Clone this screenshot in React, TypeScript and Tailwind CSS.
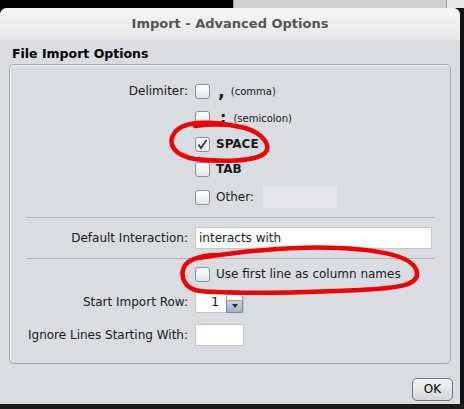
import React from "react";

function Box({ checked = false }: { checked?: boolean }) {
  return (
    <span className="relative inline-flex h-[15px] w-[15px] shrink-0 items-center justify-center rounded-[3px] border border-[#8d9096] bg-gradient-to-b from-white to-[#e4e6ea]">
      {checked && (
        <svg width="11" height="11" viewBox="0 0 11 11">
          <path d="M1.5 5.5 L4 9 L9.5 1" fill="none" stroke="#2a2d33" strokeWidth="1.6" />
        </svg>
      )}
    </span>
  );
}

function Row({
  label,
  h,
  children,
}: {
  label?: string;
  h: string;
  children: React.ReactNode;
}) {
  return (
    <div className={`flex shrink-0 items-center ${h}`}>
      <div className="w-[185px] pr-[7px] text-right">{label}</div>
      <div className="flex flex-1 items-center">{children}</div>
    </div>
  );
}

export default function App() {
  return (
    <div
      className="relative flex h-[409px] w-[464px] flex-col overflow-hidden bg-[#121212] text-[12px] text-[#1a1a1a]"
      style={{ fontFamily: '"DejaVu Sans", sans-serif' }}
    >
      <div className="flex h-[8px] shrink-0">
        <div className="w-[233px] bg-black" />
        <div className="w-[214px] border-x border-[#9a9a9a] bg-[#d0d0d0]" />
        <div className="flex-1 bg-[#e8e8e8]" />
      </div>
      <div className="flex h-[396px] w-[460px] shrink-0 flex-col rounded-t-[7px] bg-[#d9dce0]">
        <div className="flex h-[32px] shrink-0 items-center justify-center rounded-t-[7px] bg-gradient-to-b from-[#f7f7f7] to-[#e6e6e6] text-[13px] font-bold text-[#555]">
          Import - Advanced Options
        </div>
        <div className="flex flex-1 flex-col px-[9px]">
          <div className="pl-[3px] pt-[5px] text-[12.5px] font-bold text-black">File Import Options</div>
          <div className="flex h-[300px] flex-col rounded-[5px] border border-[#a5a8ad] pt-[13px] shadow-[inset_1px_1px_0_#eef0f2]">
            <Row label="Delimiter:" h="h-[27px]">
              <Box />
              <span className="ml-[8px] text-[18px] font-bold leading-none">,</span>
              <span className="ml-[6px] text-[10px]">(comma)</span>
            </Row>
            <Row h="h-[27px]">
              <Box />
              <span className="ml-[10px] text-[16px] font-bold leading-none">:</span>
              <span className="ml-[7px] text-[10px]">(semicolon)</span>
            </Row>
            <Row h="h-[25px]">
              <Box checked />
              <span className="ml-[6px] font-bold">SPACE</span>
            </Row>
            <Row h="h-[25px]">
              <Box />
              <span className="ml-[6px] font-bold">TAB</span>
            </Row>
            <Row h="h-[31px]">
              <Box />
              <span className="ml-[6px]">Other:</span>
              <div className="ml-[9px] h-[22px] w-[74px] bg-[#e3e5e8]" />
            </Row>
            <div className="mx-[16px] mt-[4px] border-t border-[#b3b6ba]" />
            <Row label="Default Interaction:" h="h-[40px]">
              <div className="flex h-[22px] w-[237px] items-center border border-[#c4c6c9] bg-white px-[3px]">
                interacts with
              </div>
            </Row>
            <div className="mx-[16px] border-t border-[#b3b6ba]" />
            <Row h="h-[31px]">
              <Box />
              <span className="ml-[6px]">Use first line as column names</span>
            </Row>
            <Row label="Start Import Row:" h="h-[24px]">
              <div className="flex h-[22px] w-[49px] border border-[#c4c6c9] bg-white">
                <div className="flex-1 pl-[15px] text-[13px] leading-[20px]">1</div>
                <div className="-mt-[2px] flex h-[23px] w-[17px] flex-col">
                  <div className="h-[11px] rounded-tr-[3px] border border-[#9aa0a8] bg-white" />
                  <div className="flex h-[12px] items-center justify-center rounded-br-[3px] border border-t-0 border-[#7d8894] bg-gradient-to-b from-[#c5d3e2] to-[#9fb2c7]">
                    <svg width="6" height="4" viewBox="0 0 6 4">
                      <path d="M0 0 H6 L3 4 Z" fill="#1c2a3a" />
                    </svg>
                  </div>
                </div>
              </div>
            </Row>
            <Row label="Ignore Lines Starting With:" h="h-[42px]">
              <div className="h-[22px] w-[49px] border border-[#c4c6c9] bg-white" />
            </Row>
          </div>
          <div className="-mr-[2px] flex flex-1 items-start justify-end pt-[14px]">
            <button className="h-[23px] w-[41px] rounded-[5px] border border-[#6f7379] bg-gradient-to-b from-[#f4f5f6] to-[#d2d5d9] text-[12px] text-black">
              OK
            </button>
          </div>
        </div>
      </div>
      <div className="flex-1 bg-[#1b1b1b]" />
      <svg className="pointer-events-none absolute left-0 top-0" width="464" height="409">
        <path
          d="M240 127 C215 121 185 120 175 132 C166 144 175 156 195 159 C220 162 255 162 265 153 C272 145 262 133 245 128 C230 124 210 124 195 126"
          fill="none"
          stroke="#f00000"
          strokeWidth="4.5"
          strokeLinecap="round"
        />
        <path
          d="M198 258 C250 250 300 246 340 248 C380 250 414 256 417 272 C419 285 400 288 360 290 C300 293 230 294 200 291 C184 289 180 276 184 267 C188 259 200 256 215 255"
          fill="none"
          stroke="#f00000"
          strokeWidth="4.5"
          strokeLinecap="round"
        />
      </svg>
    </div>
  );
}
